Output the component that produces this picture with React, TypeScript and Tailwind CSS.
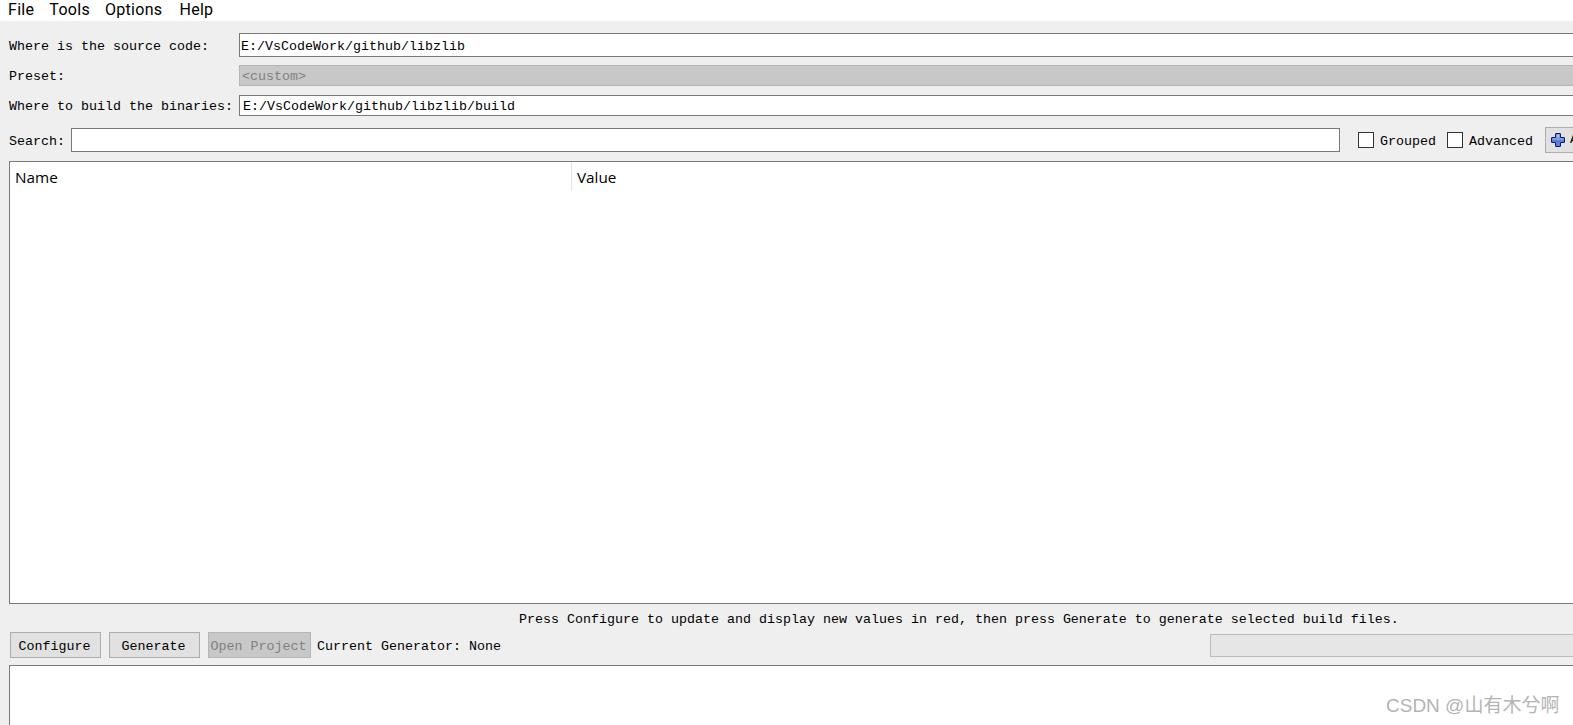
const mono = "font-['Liberation_Mono',monospace] text-[13.33px] leading-4 text-black";

function CheckOption({ label }: { label: string }) {
  return (
    <label className="flex items-center gap-[6px]">
      <span className="h-4 w-4 border border-[#333] bg-white" />
      <span className="pt-[4px]">{label}</span>
    </label>
  );
}

function PlusIcon() {
  return (
    <svg width="14" height="14" viewBox="0 0 14 14" className="shrink-0">
      <path
        d="M5 .5h4a.5.5 0 0 1 .5.5v3.5H13a.5.5 0 0 1 .5.5v4a.5.5 0 0 1-.5.5H9.500V13a.5.5 0 0 1-.5.5H5a.5.5 0 0 1-.5-.5V9.500H1a.5.5 0 0 1-.5-.5V5A.5.5 0 0 1 1 4.500h3.500V1A.5.5 0 0 1 5 .5z"
        fill="#5b7fd6"
        stroke="#0f1d66"
      />
      <path d="M5.500 1.500h3v3h-3zM1.500 5.500h11v1h-11z" fill="#a9bdf0" />
    </svg>
  );
}

function ToolButton({ label, className }: { label: string; className: string }) {
  return (
    <button className={`flex h-[26px] shrink-0 items-center justify-center border pt-[4px] pr-[2px] ${className}`}>
      {label}
    </button>
  );
}

export default function App() {
  return (
    <div className={`relative flex h-[725px] w-full flex-col overflow-hidden bg-[#efefef] ${mono}`}>
      {/* Menu bar */}
      <nav className="flex h-[21px] shrink-0 items-start gap-[15px] bg-white pl-2 font-['Roboto',sans-serif] text-[16px] leading-[19px] tracking-[0.3px] text-black">
        <span>File</span>
        <span>Tools</span>
        <span>Options</span>
        <span className="ml-[2px]">Help</span>
      </nav>

      <div className="flex w-[1600px] flex-1 flex-col pl-[9px] pt-3">
        {/* Paths */}
        <div className="grid grid-cols-[230px_1fr] items-center gap-y-2">
          <span className="pt-[4px]">Where is the source code:</span>
          <div className="flex h-6 items-center border border-[#7a7a7a] bg-white pl-[1px] pt-[4px]">
            E:/VsCodeWork/github/libzlib
          </div>
          <span className="pt-[2px]">Preset:</span>
          <div className="flex h-[21px] items-center border border-[#b5b5b5] bg-[#c8c8c8] pl-[2px] pt-[2px] text-[#808080]">
            &lt;custom&gt;
          </div>
          <span className="pt-[4px]">Where to build the binaries:</span>
          <div className="mt-px flex h-[21px] items-center border border-[#7a7a7a] bg-white pl-[3px] pt-[2px]">
            E:/VsCodeWork/github/libzlib/build
          </div>
        </div>

        {/* Search */}
        <div className="mt-[11px] flex h-[26px] items-center">
          <span className="w-[62px] shrink-0 pt-[4px]">Search:</span>
          <div className="h-6 w-[1269px] shrink-0 border border-[#7a7a7a] bg-white" />
          <div className="ml-[18px] flex shrink-0 gap-[11px]">
            <CheckOption label="Grouped" />
            <CheckOption label="Advanced" />
          </div>
          <button className="ml-3 flex h-[26px] w-[120px] shrink-0 items-center gap-[5px] border border-[#adadad] bg-[#e1e1e1] pl-[5px]">
            <PlusIcon />
            Add Entry
          </button>
        </div>

        {/* Cache table */}
        <div className="mt-2 h-[443px] shrink-0 border border-[#7a7a7a] bg-white">
          <div className="flex h-[29px] font-['Open_Sans',sans-serif] text-[15.3px] leading-[31px]">
            <div className="w-[562px] border-r border-[#e5e5e5] pl-[5px]">Name</div>
            <div className="pl-[5px]">Value</div>
          </div>
        </div>

        <p className="mt-2 whitespace-nowrap pl-[510px]">
          Press Configure to update and display new values in red, then press Generate to generate selected build files.
        </p>

        {/* Actions */}
        <div className="mt-1 flex items-center">
          <ToolButton label="Configure" className="ml-[1px] w-[91px] border-[#adadad] bg-[#e1e1e1]" />
          <ToolButton label="Generate" className="ml-2 w-[91px] border-[#adadad] bg-[#e1e1e1]" />
          <ToolButton label="Open Project" className="ml-2 w-[103px] border-[#b5b5b5] bg-[#c8c8c8] text-[#808080]" />
          <span className="ml-[6px] shrink-0 whitespace-nowrap pt-[4px]">Current Generator: None</span>
          <div className="ml-[709px] h-[23px] w-[380px] shrink-0 border border-[#bcbcbc] bg-[#e6e6e6]" />
        </div>

        {/* Output log */}
        <div className="mt-[7px] flex-1 border border-b-0 border-[#7a7a7a] bg-white" />
      </div>

      {/* Watermark */}
      <span className="absolute left-[1386px] top-[694px] font-['Liberation_Sans','Noto_Sans_CJK_SC',sans-serif] text-[19px] leading-6 text-[#b4b4b4]">
        CSDN @山有木兮啊
      </span>
    </div>
  );
}
